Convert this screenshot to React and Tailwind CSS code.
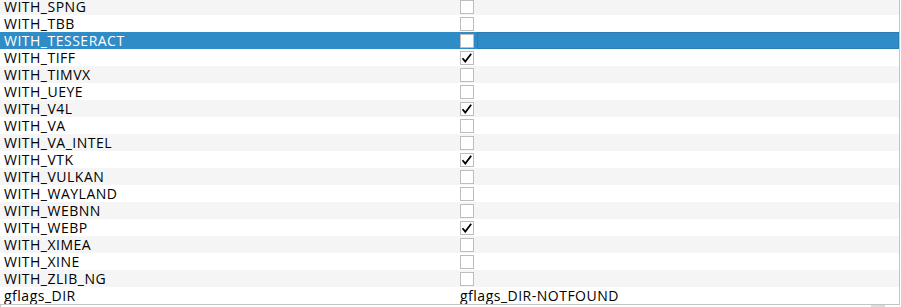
import React from 'react';

const rows = [
  { name: 'WITH_SPNG', checked: false },
  { name: 'WITH_TBB', checked: false },
  { name: 'WITH_TESSERACT', checked: false, selected: true },
  { name: 'WITH_TIFF', checked: true },
  { name: 'WITH_TIMVX', checked: false },
  { name: 'WITH_UEYE', checked: false },
  { name: 'WITH_V4L', checked: true },
  { name: 'WITH_VA', checked: false },
  { name: 'WITH_VA_INTEL', checked: false },
  { name: 'WITH_VTK', checked: true },
  { name: 'WITH_VULKAN', checked: false },
  { name: 'WITH_WAYLAND', checked: false },
  { name: 'WITH_WEBNN', checked: false },
  { name: 'WITH_WEBP', checked: true },
  { name: 'WITH_XIMEA', checked: false },
  { name: 'WITH_XINE', checked: false },
  { name: 'WITH_ZLIB_NG', checked: false },
  { name: 'gflags_DIR', value: 'gflags_DIR-NOTFOUND' },
];

const CheckBox = ({ checked }) => (
  <div className="w-[14px] h-[14px] border border-[#bdbdbd] bg-white flex items-center justify-center shrink-0">
    {checked && (
      <svg width="12" height="12" viewBox="0 0 12 12">
        <path d="M1.5 6.2 L4.3 9.6 L10.2 1.8" fill="none" stroke="#000" strokeWidth="1.8" strokeLinejoin="miter" />
      </svg>
    )}
  </div>
);

const Row = ({ row, index }) => {
  const bg = row.selected ? 'bg-[#308cc6]' : index % 2 === 0 ? 'bg-[#f5f5f5]' : 'bg-white';
  const text = row.selected ? 'text-white' : 'text-black';
  return (
    <div className={`flex h-[17px] items-center ${bg} ${text}`}>
      <div className="w-[456px] pl-[4px] shrink-0 leading-[17px] whitespace-nowrap">{row.name}</div>
      <div className="flex-1 flex items-center h-full pl-[4px]">
        {row.value !== undefined ? (
          <span className="leading-[17px] whitespace-nowrap">{row.value}</span>
        ) : (
          <>
            <CheckBox checked={row.checked} />
            {row.selected && (
              <div className="flex-1 h-full ml-[3px] border border-[#2b7db3]" />
            )}
          </>
        )}
      </div>
    </div>
  );
}

export default function App() {
  return (
    <div className="w-[901px] h-[307px] bg-white overflow-hidden text-[14px] tracking-[0.5px] font-['Open_Sans','Noto_Sans',sans-serif]">
      <div className="w-[900px] h-[305px] border-r border-b border-[#c4c4c4] overflow-hidden">
        <div className="-mt-[2px]">
          {rows.map((row, i) => (
            <Row key={row.name} row={row} index={i} />
          ))}
        </div>
      </div>
      <div className="flex h-[2px]">
        <div className="w-[1px] h-full bg-[#c4c4c4]" />
        <div className="w-[870px]" />
        <div className="w-[14px] h-full bg-[#dcdcdc]" />
      </div>
    </div>
  );
}
